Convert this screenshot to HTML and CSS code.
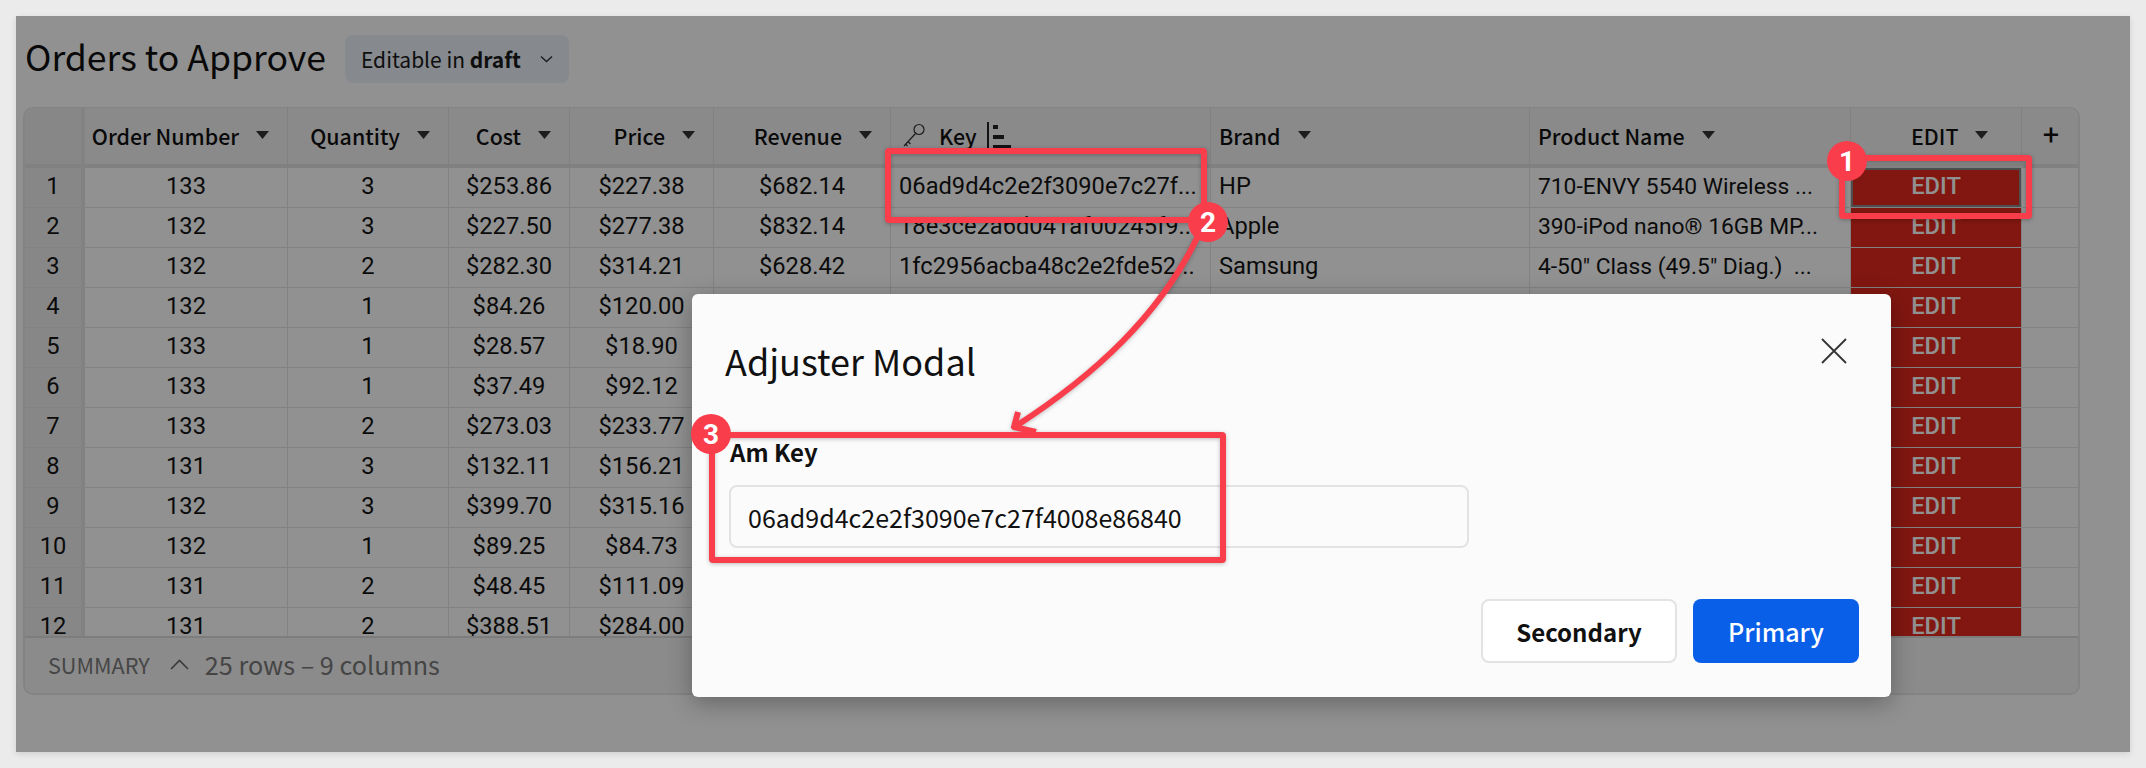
FILE: index.html
```html
<!DOCTYPE html>
<html lang="en">
<head>
<meta charset="utf-8">
<title>Orders to Approve</title>
<link rel="stylesheet" href="styles.css">
</head>
<body>
<svg width="0" height="0" class="defs"><defs>
<g id="caret"><path d="M0 0H13L6.5 8Z"/></g>
</defs></svg>
<main class="panel">
  <header class="top">
    <h1 class="title">Orders to Approve</h1>
    <button class="chip">Editable in&nbsp;<b>draft</b>
      <svg class="chip-chev" width="13" height="8" viewBox="0 0 13 8"><path d="M1 1.5L6.5 6.5L12 1.5"/></svg>
    </button>
  </header>
  <section class="grid-card">
    <div class="grid-clip">
      <table class="grid">
        <colgroup><col class="c0"><col class="c1"><col class="c2"><col class="c3"><col class="c4"><col class="c5"><col class="c6"><col class="c7"><col class="c8"><col class="c9"><col class="c10"></colgroup>
        <thead>
          <tr>
            <th class="idx"></th>
            <th><div class="h h-r">Order Number<svg class="car" width="13" height="8"><use href="#caret"/></svg></div></th>
            <th><div class="h h-r">Quantity<svg class="car" width="13" height="8"><use href="#caret"/></svg></div></th>
            <th><div class="h h-r">Cost<svg class="car" width="13" height="8"><use href="#caret"/></svg></div></th>
            <th><div class="h h-r">Price<svg class="car" width="13" height="8"><use href="#caret"/></svg></div></th>
            <th><div class="h h-r">Revenue<svg class="car" width="13" height="8"><use href="#caret"/></svg></div></th>
            <th><div class="h h-key">
              <svg class="key" width="24" height="26" viewBox="0 0 24 26"><circle cx="17" cy="7.5" r="5"/><path d="M13.5 11.5L2 24M6 19.5L8.5 22M3.5 22L5.5 24"/></svg>
              <span class="key-t">Key</span>
              <svg class="sort" width="24" height="27" viewBox="0 0 24 27"><path d="M1 0V26" class="sl"/><rect x="6" y="3" width="5" height="4"/><rect x="6" y="13" width="11" height="4"/><rect x="6" y="23" width="18" height="4"/></svg>
            </div></th>
            <th><div class="h h-l">Brand<svg class="car" width="13" height="8"><use href="#caret"/></svg></div></th>
            <th><div class="h h-l">Product Name<svg class="car" width="13" height="8"><use href="#caret"/></svg></div></th>
            <th><div class="h h-e">EDIT<svg class="car" width="13" height="8"><use href="#caret"/></svg></div></th>
            <th class="plus">+</th>
          </tr>
        </thead>
        <tbody>
          <tr><td class="idx">1</td><td>133</td><td>3</td><td>$253.86</td><td>$227.38</td><td>$682.14</td><td class="l">06ad9d4c2e2f3090e7c27f...</td><td class="l">HP</td><td class="l pn">710-ENVY 5540 Wireless ...</td><td class="ed sel">EDIT</td><td></td></tr>
          <tr><td class="idx">2</td><td>132</td><td>3</td><td>$227.50</td><td>$277.38</td><td>$832.14</td><td class="l">18e3ce2a6d041af00245f9...</td><td class="l">Apple</td><td class="l pn">390-iPod nano® 16GB MP...</td><td class="ed">EDIT</td><td></td></tr>
          <tr><td class="idx">3</td><td>132</td><td>2</td><td>$282.30</td><td>$314.21</td><td>$628.42</td><td class="l">1fc2956acba48c2e2fde52...</td><td class="l">Samsung</td><td class="l pn">4-50" Class (49.5" Diag.) &nbsp;...</td><td class="ed">EDIT</td><td></td></tr>
          <tr><td class="idx">4</td><td>132</td><td>1</td><td>$84.26</td><td>$120.00</td><td></td><td></td><td></td><td></td><td class="ed">EDIT</td><td></td></tr>
          <tr><td class="idx">5</td><td>133</td><td>1</td><td>$28.57</td><td>$18.90</td><td></td><td></td><td></td><td></td><td class="ed">EDIT</td><td></td></tr>
          <tr><td class="idx">6</td><td>133</td><td>1</td><td>$37.49</td><td>$92.12</td><td></td><td></td><td></td><td></td><td class="ed">EDIT</td><td></td></tr>
          <tr><td class="idx">7</td><td>133</td><td>2</td><td>$273.03</td><td>$233.77</td><td></td><td></td><td></td><td></td><td class="ed">EDIT</td><td></td></tr>
          <tr><td class="idx">8</td><td>131</td><td>3</td><td>$132.11</td><td>$156.21</td><td></td><td></td><td></td><td></td><td class="ed">EDIT</td><td></td></tr>
          <tr><td class="idx">9</td><td>132</td><td>3</td><td>$399.70</td><td>$315.16</td><td></td><td></td><td></td><td></td><td class="ed">EDIT</td><td></td></tr>
          <tr><td class="idx">10</td><td>132</td><td>1</td><td>$89.25</td><td>$84.73</td><td></td><td></td><td></td><td></td><td class="ed">EDIT</td><td></td></tr>
          <tr><td class="idx">11</td><td>131</td><td>2</td><td>$48.45</td><td>$111.09</td><td></td><td></td><td></td><td></td><td class="ed">EDIT</td><td></td></tr>
          <tr><td class="idx">12</td><td>131</td><td>2</td><td>$388.51</td><td>$284.00</td><td></td><td></td><td></td><td></td><td class="ed">EDIT</td><td></td></tr>
        </tbody>
      </table>
    </div>
    <footer class="summary">
      <span class="sum-l">SUMMARY</span>
      <svg class="sum-chev" width="19" height="11" viewBox="0 0 19 11"><path d="M1 10L9.5 1.5L18 10"/></svg>
      <span class="sum-t">25 rows – 9 columns</span>
    </footer>
  </section>
  <div class="scrim"></div>
  <div class="modal">
    <div class="m-head">
      <h2 class="m-title">Adjuster Modal</h2>
      <svg class="m-x" width="26" height="26" viewBox="0 0 26 26"><path d="M1 1L25 25M25 1L1 25"/></svg>
    </div>
    <label class="m-label">Am Key</label>
    <div class="m-input">06ad9d4c2e2f3090e7c27f4008e86840</div>
    <div class="m-foot">
      <button class="btn sec">Secondary</button>
      <button class="btn pri">Primary</button>
    </div>
  </div>
</main>
<svg class="notes" width="2146" height="768" viewBox="0 0 2146 768">
  <g class="n-line">
    <rect x="1842" y="158" width="187" height="58" rx="1"/>
    <rect x="888" y="151" width="316" height="69" rx="1"/>
    <rect x="712" y="435" width="511" height="125" rx="1"/>
    <path d="M1198 236C1160 315 1095 375 1016 426"/>
    <path d="M1018 412L1014 427L1036 432"/>
  </g>
  <g class="n-dot">
    <circle cx="1847" cy="161" r="20"/><circle cx="1208" cy="222" r="20"/><circle cx="711" cy="434" r="20"/>
  </g>
  <g class="n-num">
    <text x="1847" y="171">1</text><text x="1208" y="232">2</text><text x="711" y="444">3</text>
  </g>
</svg>
</body>
</html>
```
FILE: styles.css
```css
* { box-sizing: border-box; }
html, body { margin: 0; height: 768px; overflow: hidden; }
body { background: #ebebeb; padding: 16px; font-family: "Noto Sans CJK SC", "Noto Sans", sans-serif; color: #1a1a1a; position: relative; }
.defs { position: absolute; }
.panel { position: relative; width: 2114px; height: 736px; background: #fff; box-shadow: 0 2px 6px rgba(0,0,0,.12); padding-left: 7px; }
.top { display: flex; align-items: center; height: 91px; padding: 0 0 8px 2px; }
.title { margin: 0 0 4px; font-size: 35.6px; font-weight: 400; line-height: 48px; color: #111; }
.chip { margin: 2px 0 0 19px; display: flex; align-items: center; height: 48px; width: 224px; padding: 0 0 0 16px; border: 0; border-radius: 8px; background: #ecf1fa; font: 400 21px "Noto Sans CJK SC", sans-serif; color: #1a1a1a; }
.chip b { font-weight: 600; }
.chip-chev { margin-left: 19px; fill: none; stroke: #333; stroke-width: 1.4; }
.grid-card { width: 2057px; height: 588px; border: 2px solid #e6e6e6; border-top-width: 1px; border-radius: 10px; overflow: hidden; background: #fff; }
.grid-clip { height: 530px; overflow: hidden; border-bottom: 2px solid #dcdcdc; }
.grid { table-layout: fixed; border-collapse: separate; border-spacing: 0; width: 2055px; }
.c0 { width: 60px; } .c1 { width: 203px; } .c2 { width: 161px; } .c3 { width: 121px; } .c4 { width: 144px; } .c5 { width: 177px; } .c6 { width: 320px; } .c7 { width: 319px; } .c8 { width: 321px; } .c9 { width: 171px; } .c10 { width: 58px; }
th { height: 60px; padding: 0 0 2px; background: #f3f3f3; border-right: 1px solid #e2e2e2; border-bottom: 4px solid #e3e3e3; font: 500 21.4px "Noto Sans CJK SC", sans-serif; color: #111; }
td { height: 40px; padding: 0 0 3px; border-right: 1px solid #e4e4e4; border-bottom: 1px solid #e4e4e4; text-align: center; font-family: Roboto, sans-serif; font-size: 23.7px; line-height: 35px; color: #151515; white-space: nowrap; overflow: hidden; }
th:last-child, td:last-child { border-right: 0; }
.idx { background: #eeeeee; border-right: 4px solid #e4e4e4; }
td.l { text-align: left; padding-left: 8px; }
td.pn { font-size: 22.8px; }
.ed { background: #e32a1d; color: #fff; font-weight: 500; position: relative; }
.sel { box-shadow: inset 0 0 0 2px #8a8a8a; }
.h { display: flex; align-items: center; height: 54px; }
.h-r { justify-content: flex-end; padding-right: 18px; }
.h-l { padding-left: 8px; }
.h-e { padding-left: 60px; }
.h-key { padding-left: 11px; }
.car { margin-left: 17px; fill: #333; }
.key { fill: none; stroke: #333; stroke-width: 1.2; }
.key-t { margin-left: 13px; }
.sort { margin-left: 10px; fill: #222; }
.sl { stroke: #222; stroke-width: 2; }
.plus { font: 400 29px Roboto, sans-serif; }
.summary { display: flex; align-items: center; height: 56px; padding: 0 0 4px 23px; background: #f5f5f5; color: #7a7a7a; }
.sum-l { font-size: 21.6px; font-weight: 400; color: #7c7c7c; }
.sum-chev { margin-left: 20px; fill: none; stroke: #666; stroke-width: 1.6; }
.sum-t { margin-left: 16px; font-size: 25.2px; }
.scrim { position: absolute; inset: 0; background: rgba(0,0,0,.43); }
.modal { position: absolute; left: 676px; top: 278px; width: 1199px; height: 403px; background: #fbfbfb; border-radius: 6px; box-shadow: 0 6px 24px rgba(0,0,0,.3); padding: 0 32px 0 33px; }
.m-head { display: flex; align-items: center; justify-content: space-between; height: 99px; padding-top: 32px; }
.m-title { margin: 0; font-size: 36px; font-weight: 400; color: #111; }
.m-x { margin-right: 12px; fill: none; stroke: #333; stroke-width: 1.8; margin-top: -18px; }
.m-label { display: block; margin-left: 5px; margin-top: 42px; font-size: 24px; font-weight: 600; line-height: 34px; color: #111; }
.m-input { display: flex; align-items: center; width: 740px; height: 63px; margin: 16px 0 0 4px; padding-left: 17px; border: 2px solid #e3e3e3; border-radius: 8px; font-size: 25px; color: #111; }
.m-foot { display: flex; justify-content: flex-end; gap: 16px; margin-top: 51px; }
.btn { height: 64px; border-radius: 8px; font: 600 24px "Noto Sans CJK SC", sans-serif; }
.sec { width: 196px; border: 2px solid #e3e3e3; background: #fff; color: #111; }
.pri { width: 166px; border: 0; background: #095fe8; color: #fff; font-weight: 500; font-size: 25px; }
.notes { position: absolute; left: 0; top: 0; pointer-events: none; }
.n-line { fill: none; stroke: #f93d4b; stroke-width: 6; stroke-linejoin: round; filter: drop-shadow(0 1px 2px rgba(0,0,0,.25)); }
.n-dot { fill: #f93d4b; }
.n-num { fill: #fff; font: 700 28px Roboto, sans-serif; text-anchor: middle; }
```
